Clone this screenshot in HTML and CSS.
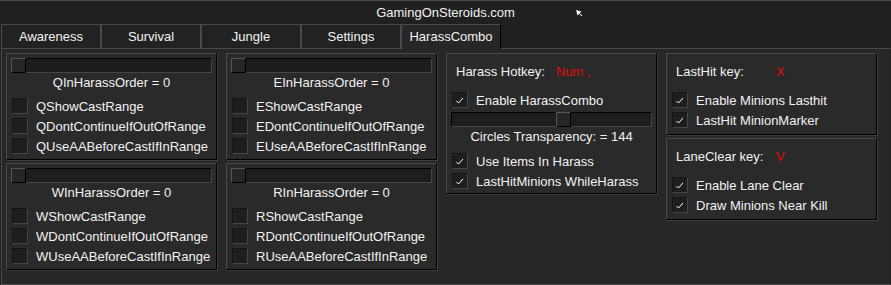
FILE: index.html
```html
<!DOCTYPE html>
<html lang="en">
<head>
    <meta charset="UTF-8">
    <title>GamingOnSteroids.com</title>
    <link rel="stylesheet" href="styles.css">
</head>
<body>
    <div class="window">
        <div class="titlebar">
            GamingOnSteroids.com
            <svg class="cursor" width="9" height="9" viewBox="0 0 9 9">
                <path d="M0.5 0.5 L7.5 2.5 L5 4 L7.5 6.5 L6.5 7.5 L4 5 L2.5 7.5 Z" fill="#fff" stroke="#000" stroke-width="0.6"/>
            </svg>
        </div>
        <div class="tabs">
            <div class="tab">Awareness</div>
            <div class="tab">Survival</div>
            <div class="tab">Jungle</div>
            <div class="tab">Settings</div>
            <div class="tab active">HarassCombo</div>
        </div>
        <div class="frame">
            <div class="column">
                <div class="panel order-panel">
                    <div class="slider"><div class="thumb"></div></div>
                    <div class="order-label">QInHarassOrder = 0</div>
                    <div class="checks">
                        <div class="check-row"><span class="box"></span>QShowCastRange</div>
                        <div class="check-row"><span class="box"></span>QDontContinueIfOutOfRange</div>
                        <div class="check-row"><span class="box"></span>QUseAABeforeCastIfInRange</div>
                    </div>
                </div>
                <div class="panel order-panel">
                    <div class="slider"><div class="thumb"></div></div>
                    <div class="order-label">WInHarassOrder = 0</div>
                    <div class="checks">
                        <div class="check-row"><span class="box"></span>WShowCastRange</div>
                        <div class="check-row"><span class="box"></span>WDontContinueIfOutOfRange</div>
                        <div class="check-row"><span class="box"></span>WUseAABeforeCastIfInRange</div>
                    </div>
                </div>
            </div>
            <div class="column">
                <div class="panel order-panel">
                    <div class="slider"><div class="thumb"></div></div>
                    <div class="order-label">EInHarassOrder = 0</div>
                    <div class="checks">
                        <div class="check-row"><span class="box"></span>EShowCastRange</div>
                        <div class="check-row"><span class="box"></span>EDontContinueIfOutOfRange</div>
                        <div class="check-row"><span class="box"></span>EUseAABeforeCastIfInRange</div>
                    </div>
                </div>
                <div class="panel order-panel">
                    <div class="slider"><div class="thumb"></div></div>
                    <div class="order-label">RInHarassOrder = 0</div>
                    <div class="checks">
                        <div class="check-row"><span class="box"></span>RShowCastRange</div>
                        <div class="check-row"><span class="box"></span>RDontContinueIfOutOfRange</div>
                        <div class="check-row"><span class="box"></span>RUseAABeforeCastIfInRange</div>
                    </div>
                </div>
            </div>
            <div class="column">
                <div class="panel key-panel">
                    <div class="key-row"><span class="key-label">Harass Hotkey:</span><span class="key-value">Num ,</span></div>
                    <div class="checks">
                        <div class="check-row"><span class="box"><svg width="14" height="14" viewBox="0 0 14 14"><polyline points="3.5,8 5.5,10 10,5" fill="none" stroke="#fff" stroke-width="1"/></svg></span>Enable HarassCombo</div>
                    </div>
                    <div class="slider wide"><div class="thumb" style="left: 104px"></div></div>
                    <div class="order-label">Circles Transparency: = 144</div>
                    <div class="checks after-label">
                        <div class="check-row"><span class="box"><svg width="14" height="14" viewBox="0 0 14 14"><polyline points="3.5,8 5.5,10 10,5" fill="none" stroke="#fff" stroke-width="1"/></svg></span>Use Items In Harass</div>
                        <div class="check-row"><span class="box"><svg width="14" height="14" viewBox="0 0 14 14"><polyline points="3.5,8 5.5,10 10,5" fill="none" stroke="#fff" stroke-width="1"/></svg></span>LastHitMinions WhileHarass</div>
                    </div>
                </div>
            </div>
            <div class="column">
                <div class="panel key-panel short">
                    <div class="key-row"><span class="key-label">LastHit key:</span><span class="key-value">X</span></div>
                    <div class="checks">
                        <div class="check-row"><span class="box"><svg width="14" height="14" viewBox="0 0 14 14"><polyline points="3.5,8 5.5,10 10,5" fill="none" stroke="#fff" stroke-width="1"/></svg></span>Enable Minions Lasthit</div>
                        <div class="check-row"><span class="box"><svg width="14" height="14" viewBox="0 0 14 14"><polyline points="3.5,8 5.5,10 10,5" fill="none" stroke="#fff" stroke-width="1"/></svg></span>LastHit MinionMarker</div>
                    </div>
                </div>
                <div class="panel key-panel short">
                    <div class="key-row"><span class="key-label">LaneClear key:</span><span class="key-value">V</span></div>
                    <div class="checks">
                        <div class="check-row"><span class="box"><svg width="14" height="14" viewBox="0 0 14 14"><polyline points="3.5,8 5.5,10 10,5" fill="none" stroke="#fff" stroke-width="1"/></svg></span>Enable Lane Clear</div>
                        <div class="check-row"><span class="box"><svg width="14" height="14" viewBox="0 0 14 14"><polyline points="3.5,8 5.5,10 10,5" fill="none" stroke="#fff" stroke-width="1"/></svg></span>Draw Minions Near Kill</div>
                    </div>
                </div>
            </div>
        </div>
    </div>
</body>
</html>
```

FILE: styles.css
```css
* {
    box-sizing: border-box;
}
body {
    margin: 0;
    background-color: #202020;
    font-family: "Liberation Sans", Arial, sans-serif;
    font-size: 13px;
    color: #f2f2f2;
}
.window {
    width: 891px;
    height: 285px;
    background-color: #202020;
    border-top: 1px solid #4a4a4a;
    display: flex;
    flex-direction: column;
}
.titlebar {
    position: relative;
    height: 23px;
    line-height: 23px;
    text-align: center;
}
.cursor {
    position: absolute;
    left: 575px;
    top: 8px;
}
.tabs {
    display: flex;
    height: 24px;
    margin-left: 1px;
}
.tab {
    width: 100px;
    height: 24px;
    line-height: 23px;
    text-align: center;
    background-color: #222222;
    border: 1px solid #4a4a4a;
    border-bottom: none;
}
.tab.active {
    position: relative;
    z-index: 1;
    height: 25px;
    margin-bottom: -1px;
    background-color: #272727;
    border-right-color: #000000;
}
.frame {
    flex: 1;
    display: flex;
    gap: 9px;
    margin-left: 1px;
    padding: 4px;
    background-color: #272727;
    border: 1px solid #4a4a4a;
    border-right-color: #202020;
}
.column {
    width: 211px;
    display: flex;
    flex-direction: column;
    gap: 3px;
}
.panel {
    background-color: #2a2a2a;
    border: 1px solid;
    border-color: #4a4a4a #000000 #000000 #4a4a4a;
    box-shadow: 1px 1px 0 #3c3c3c;
}
.order-panel {
    height: 107px;
    padding: 4px 4px 3px;
}
.key-panel {
    padding: 8px 4px 2px;
}
.key-panel.short {
    padding-bottom: 4px;
}
.slider {
    position: relative;
    height: 15px;
    background-color: #1d1d1d;
    border: 1px solid;
    border-color: #000000 #454545 #454545 #000000;
}
.slider.wide {
    margin-top: 2px;
}
.thumb {
    position: absolute;
    top: -1px;
    left: -1px;
    width: 15px;
    height: 15px;
    background-color: #262626;
    border: 1px solid;
    border-color: #555555 #000000 #000000 #555555;
}
.order-label {
    margin-top: 1px;
    line-height: 18px;
    text-align: center;
}
.checks {
    margin-top: 4px;
}
.key-panel .checks {
    margin-top: 8px;
}
.key-panel .checks.after-label {
    margin-top: 5px;
}
.check-row {
    display: flex;
    align-items: center;
    gap: 8px;
    height: 20px;
    padding-left: 1px;
    white-space: nowrap;
}
.box {
    width: 16px;
    height: 16px;
    flex: none;
    background-color: #1e1e1e;
    border: 1px solid;
    border-color: #151515 #464646 #464646 #151515;
}
.box svg {
    display: block;
}
.key-row {
    height: 20px;
    line-height: 20px;
    padding-left: 5px;
}
.key-label {
    display: inline-block;
    width: 100px;
}
.key-value {
    color: #e00a0a;
}
```
